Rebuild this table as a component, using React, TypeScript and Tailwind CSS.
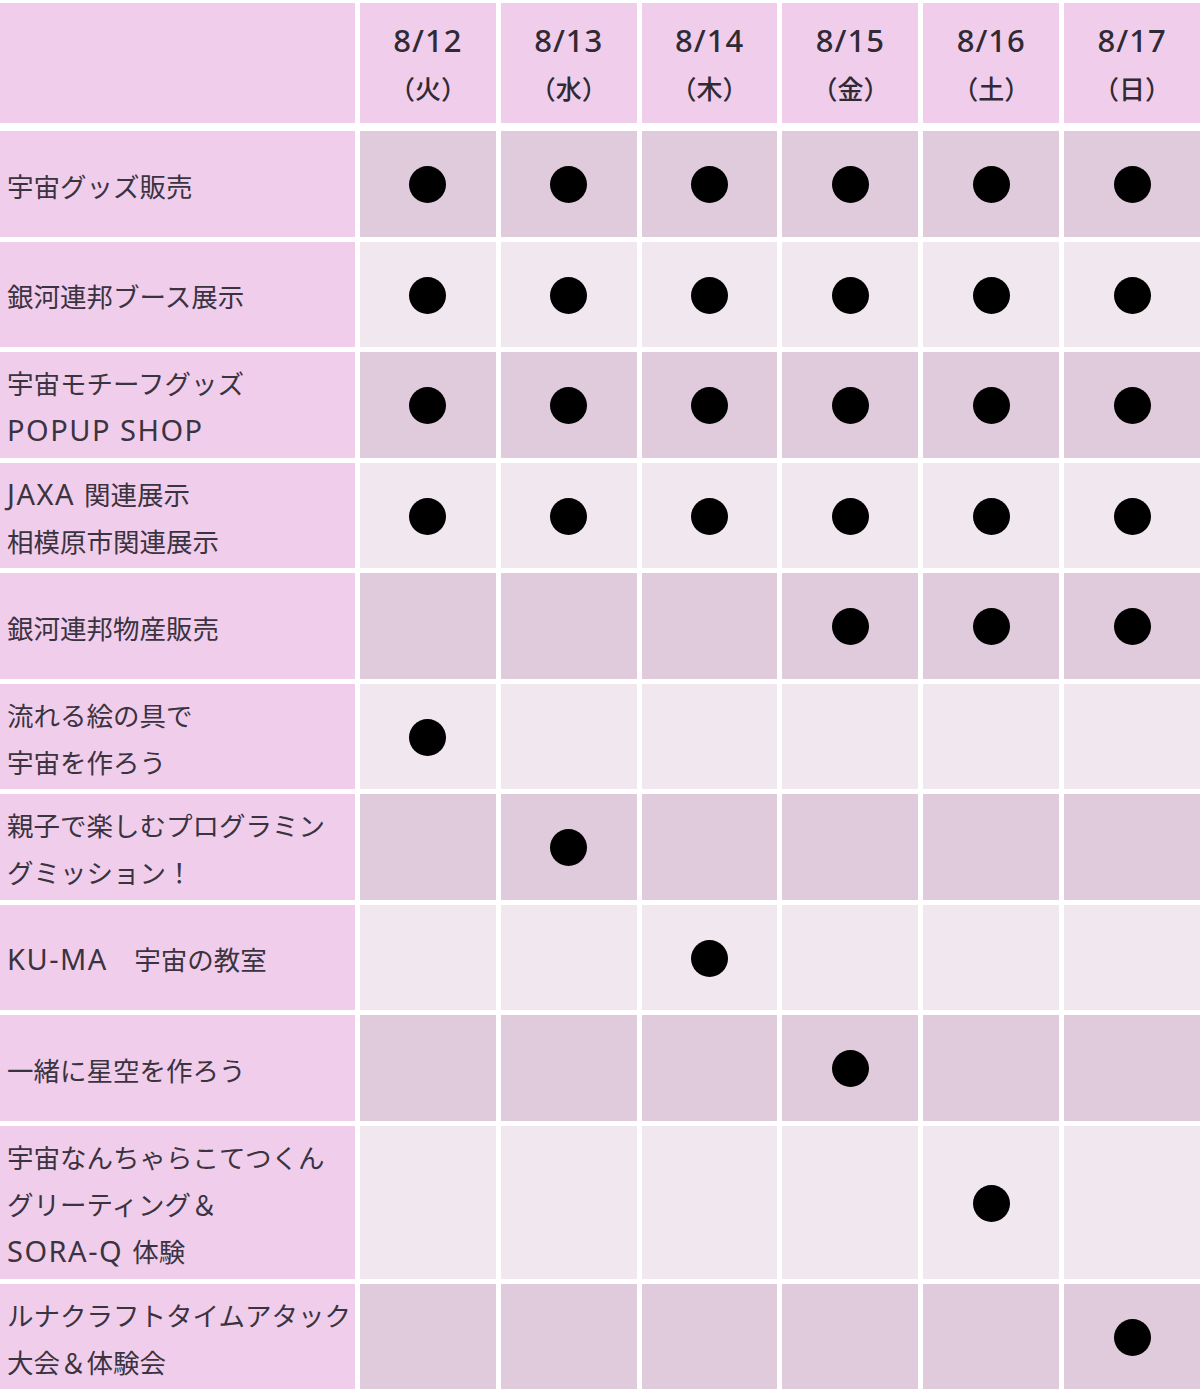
const DAYS = [
  { date: "8/12", dow: "火" },
  { date: "8/13", dow: "水" },
  { date: "8/14", dow: "木" },
  { date: "8/15", dow: "金" },
  { date: "8/16", dow: "土" },
  { date: "8/17", dow: "日" },
];

type Row = { label: string[]; on: number[]; tall?: boolean };

const ROWS: Row[] = [
  { label: ["宇宙グッズ販売"], on: [0, 1, 2, 3, 4, 5] },
  { label: ["銀河連邦ブース展示"], on: [0, 1, 2, 3, 4, 5] },
  { label: ["宇宙モチーフグッズ", "POPUP SHOP"], on: [0, 1, 2, 3, 4, 5] },
  { label: ["JAXA 関連展示", "相模原市関連展示"], on: [0, 1, 2, 3, 4, 5] },
  { label: ["銀河連邦物産販売"], on: [3, 4, 5] },
  { label: ["流れる絵の具で", "宇宙を作ろう"], on: [0] },
  { label: ["親子で楽しむプログラミン", "グミッション！"], on: [1] },
  { label: ["KU-MA　宇宙の教室"], on: [2] },
  { label: ["一緒に星空を作ろう"], on: [3] },
  { label: ["宇宙なんちゃらこてつくん", "グリーティング＆", "SORA-Q 体験"], on: [4], tall: true },
  { label: ["ルナクラフトタイムアタック", "大会＆体験会"], on: [5] },
];

const font = { fontFamily: '"Noto Sans CJK JP", "Noto Sans", sans-serif' };

// latin runs are set a bit larger and wider, as in the original artwork
function Label({ text }: { text: string }) {
  const parts = text.split(/([A-Za-z][A-Za-z\- ]*)/);
  return (
    <span className="whitespace-nowrap">
      {parts.map((p, i) =>
        /^[A-Za-z]/.test(p) ? (
          <span
            key={i}
            className="text-[29px] tracking-[1.5px]"
            style={{ fontFamily: '"Noto Sans", sans-serif' }}
          >
            {p}
          </span>
        ) : (
          <span key={i}>{p}</span>
        )
      )}
    </span>
  );
}

export default function App() {
  return (
    <div className="w-[1200px] h-[1397px] overflow-hidden bg-white pt-[3px]" style={font}>
      {/* header */}
      <div className="grid grid-cols-[355px_repeat(6,minmax(0,1fr))] gap-x-[5px] h-[120px]">
        <div className="bg-[#f1cdec]" />
        {DAYS.map((d) => (
          <div
            key={d.date}
            className="bg-[#f1cdec] flex flex-col items-center justify-center text-[#2f2a33] leading-[48px] pt-[2px]"
          >
            <span className="text-[31px] font-medium tracking-[1px]" style={{ fontFamily: '"Noto Sans", sans-serif' }}>
              {d.date}
            </span>
            <span className="text-[26px] font-medium">（{d.dow}）</span>
          </div>
        ))}
      </div>

      <div className="flex flex-col gap-y-[5px] mt-[8px]">
        {ROWS.map((r, i) => {
          const cell = i % 2 === 0 ? "bg-[#dfcbdc]" : "bg-[#f1e7ef]";
          return (
            <div
              key={i}
              className={
                "grid grid-cols-[355px_repeat(6,minmax(0,1fr))] gap-x-[5px] " +
                (r.tall ? "h-[153px]" : "h-[105.5px]")
              }
            >
              <div className="bg-[#f1cdec] flex flex-col justify-center pl-[7px] pt-[3px] text-[#3a3340] text-[26.5px] leading-[47px]">
                {r.label.map((l) => (
                  <Label key={l} text={l} />
                ))}
              </div>
              {DAYS.map((_, c) => (
                <div key={c} className={cell + " flex items-center justify-center pt-[2px]"}>
                  {r.on.includes(c) && (
                    <span className="block w-[37px] h-[37px] rounded-full bg-black" />
                  )}
                </div>
              ))}
            </div>
          );
        })}
      </div>
    </div>
  );
}
